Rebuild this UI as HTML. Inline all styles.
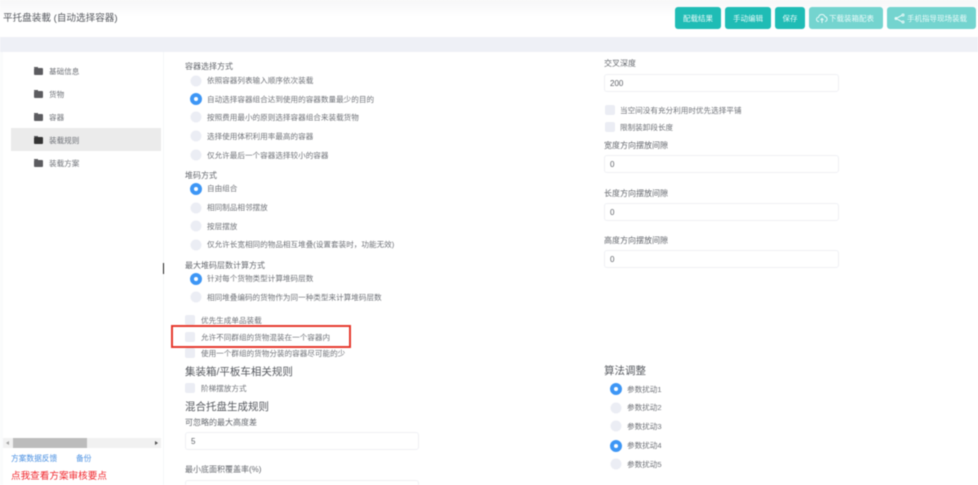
<!DOCTYPE html>
<html lang="zh">
<head>
<meta charset="utf-8">
<title>平托盘装载</title>
<style>
html,body{margin:0;padding:0;width:978px;height:485px;overflow:hidden;background:#fff}
body{position:relative;font-family:"Liberation Sans","Noto Sans CJK SC",sans-serif;color:#606266}
#w{position:absolute;left:0;top:0;width:978px;height:485px;overflow:hidden;filter:blur(.4px)}
.a{position:absolute;white-space:nowrap;line-height:12px;transform:translateY(-5px)}
.l{font-size:8px;color:#63666c}
.o{font-size:7.6px;color:#6e7177}
.h{font-size:10.5px;color:#55585e;line-height:14px;transform:translateY(-6px)}
.r{position:absolute;width:11px;height:11px;border-radius:50%;background:#ebedf4;transform:translate(-5.5px,-5.5px)}
.r.on{background:#fff;border:4px solid #3d96f5;width:4px;height:4px;transform:translate(-6px,-6px)}
.c{position:absolute;width:10px;height:10px;border-radius:2px;background:#ebedf4;transform:translateY(-5px)}
.i{position:absolute;box-sizing:border-box;background:#fff;border:1px solid #eff0f4;border-radius:3px;font-size:8px;color:#5f6268;line-height:18px;padding-left:5px}
.b{position:absolute;top:7px;height:22px;border-radius:3px;background:#1fbcb5;color:#e8faf9;font-size:7.5px;line-height:23px;text-align:center}
.b.d{background:#74d4cf}
.f{position:absolute;left:34px;width:9px;height:7px;background:#5c5c60;border-radius:1px;transform:translateY(-3px)}
.f:before{content:"";position:absolute;left:0;top:-1px;width:4px;height:1px;background:#5c5c60}
</style>
</head>
<body>
<div id="w">
<div style="position:absolute;left:0;top:0;width:978px;height:37px;background:linear-gradient(#f7f7f8,#fff 45%)"></div>
<div style="position:absolute;left:0;top:37px;width:978px;height:15px;background:#eef0f6"></div>
<div style="position:absolute;left:0;top:52px;width:3px;height:433px;background:#fafbfc"></div>
<div style="position:absolute;left:163px;top:52px;width:1px;height:433px;background:#f6f7f9"></div>

<div class="a" style="left:3px;top:18px;font-size:9.6px;color:#55585e">平托盘装載 (自动选择容器)</div>

<div class="b" style="left:675px;width:46px">配载结果</div>
<div class="b" style="left:725px;width:46px">手动编辑</div>
<div class="b" style="left:775px;width:30px">保存</div>
<div class="b d" style="left:809px;width:74px;padding-left:11px;box-sizing:border-box">下载装箱配表</div>
<svg style="position:absolute;left:816px;top:13px" width="12" height="11" viewBox="0 0 12 11" fill="none" stroke="#e8faf9" stroke-width="1"><path d="M3 8.5H2.6A2.1 2.1 0 0 1 2.6 4.3 3.3 3.3 0 0 1 9 3.8 2.4 2.4 0 0 1 9.2 8.5H9"/><path d="M6 10V5.5M4.5 7 6 5.5 7.500 7"/></svg>
<div class="b d" style="left:887px;width:89px;padding-left:11px;box-sizing:border-box">手机指导现场装载</div>
<svg style="position:absolute;left:894px;top:13px" width="11" height="11" viewBox="0 0 11 11" fill="none" stroke="#e8faf9" stroke-width="1"><path d="M8.500 2 2 5.500 8.500 9"/><circle cx="9" cy="2" r="1"/><circle cx="2" cy="5.500" r="1"/><circle cx="9" cy="9" r="1"/></svg>

<!-- sidebar -->
<div style="position:absolute;left:11px;top:128px;width:150px;height:23px;background:#ebebeb"></div>
<div class="f" style="top:71px"></div><div class="a o" style="left:49px;top:71px">基础信息</div>
<div class="f" style="top:94px"></div><div class="a o" style="left:49px;top:94px">货物</div>
<div class="f" style="top:117px"></div><div class="a o" style="left:49px;top:117px">容器</div>
<div class="f" style="top:140px;background:#333"></div><div class="a o" style="left:49px;top:140px">装载规则</div>
<div class="f" style="top:163px"></div><div class="a o" style="left:49px;top:163px">装载方案</div>

<div style="position:absolute;left:3px;top:438px;width:158px;height:10px;background:#f1f1f1"></div>
<div style="position:absolute;left:13px;top:438px;width:74px;height:10px;background:#bcbcbc"></div>
<div style="position:absolute;left:6px;top:441px;border:2px solid transparent;border-right:3px solid #a3a3a3;border-left:0"></div>
<div style="position:absolute;left:155px;top:441px;border:2px solid transparent;border-left:3px solid #505050;border-right:0"></div>
<div class="a" style="left:11px;top:458px;font-size:7.7px;color:#4a90e2">方案数据反馈</div>
<div class="a" style="left:76px;top:458px;font-size:7.7px;color:#4a90e2">备份</div>
<div class="a" style="left:11px;top:476px;font-size:9.6px;color:#f0262c">点我查看方案审核要点</div>
<div style="position:absolute;left:163px;top:263px;width:1px;height:11px;background:#222"></div>

<!-- middle column -->
<div class="a l" style="left:185px;top:66px">容器选择方式</div>
<div class="r" style="left:195.500px;top:81px"></div><div class="a o" style="left:207px;top:80px">依照容器列表输入顺序依次装载</div>
<div class="r on" style="left:195.500px;top:99px"></div><div class="a o" style="left:207px;top:99px">自动选择容器组合达到使用的容器数量最少的目的</div>
<div class="r" style="left:195.500px;top:117px"></div><div class="a o" style="left:207px;top:117px">按照费用最小的原则选择容器组合来装载货物</div>
<div class="r" style="left:195.500px;top:136px"></div><div class="a o" style="left:207px;top:136px">选择使用体积利用率最高的容器</div>
<div class="r" style="left:195.500px;top:155px"></div><div class="a o" style="left:207px;top:155px">仅允许最后一个容器选择较小的容器</div>

<div class="a l" style="left:185px;top:175px">堆码方式</div>
<div class="r on" style="left:195.500px;top:189px"></div><div class="a o" style="left:207px;top:188px">自由组合</div>
<div class="r" style="left:195.500px;top:207.500px"></div><div class="a o" style="left:207px;top:207px">相同制品相邻摆放</div>
<div class="r" style="left:195.500px;top:226px"></div><div class="a o" style="left:207px;top:226px">按层摆放</div>
<div class="r" style="left:195.500px;top:244.500px"></div><div class="a o" style="left:207px;top:244px">仅允许长宽相同的物品相互堆叠(设置套装时，功能无效)</div>

<div class="a l" style="left:185px;top:265px">最大堆码层数计算方式</div>
<div class="r on" style="left:195.500px;top:279px"></div><div class="a o" style="left:207px;top:278px">针对每个货物类型计算堆码层数</div>
<div class="r" style="left:195.500px;top:297px"></div><div class="a o" style="left:207px;top:297px">相同堆叠编码的货物作为同一种类型来计算堆码层数</div>

<div class="c" style="left:185px;top:320px"></div><div class="a o" style="left:201px;top:320px">优先生成单品装载</div>
<div class="c" style="left:185px;top:337px"></div><div class="a o" style="left:201px;top:337px">允许不同群组的货物混装在一个容器内</div>
<div class="c" style="left:185px;top:353px"></div><div class="a o" style="left:201px;top:353px">使用一个群组的货物分装的容器尽可能的少</div>
<div style="position:absolute;left:171px;top:325px;width:180px;height:23px;box-sizing:border-box;border:2px solid #e63a2e"></div>

<div class="a h" style="left:185px;top:371px">集装箱/平板车相关规则</div>
<div class="c" style="left:185px;top:388px"></div><div class="a o" style="left:201px;top:388px">阶梯摆放方式</div>
<div class="a h" style="left:185px;top:406px">混合托盘生成规则</div>
<div class="a l" style="left:185px;top:422px">可忽略的最大高度差</div>
<div class="i" style="left:185px;top:432px;width:234px;height:18px">5</div>
<div class="a l" style="left:185px;top:469px">最小底面积覆盖率(%)</div>
<div class="i" style="left:185px;top:480px;width:234px;height:18px"></div>

<!-- right column -->
<div class="a l" style="left:604px;top:63px">交叉深度</div>
<div class="i" style="left:604px;top:74px;width:235px;height:18px">200</div>
<div class="c" style="left:605px;top:110px"></div><div class="a o" style="left:620px;top:110px">当空间没有充分利用时优先选择平铺</div>
<div class="c" style="left:605px;top:127px"></div><div class="a o" style="left:620px;top:127px">限制装卸段长度</div>
<div class="a l" style="left:604px;top:145px">宽度方向摆放间隙</div>
<div class="i" style="left:604px;top:155px;width:235px;height:18px">0</div>
<div class="a l" style="left:604px;top:193px">长度方向摆放间隙</div>
<div class="i" style="left:604px;top:203px;width:235px;height:18px">0</div>
<div class="a l" style="left:604px;top:240px">高度方向摆放间隙</div>
<div class="i" style="left:604px;top:250px;width:235px;height:18px">0</div>

<div class="a h" style="left:604px;top:370px">算法调整</div>
<div class="r on" style="left:615.500px;top:389px"></div><div class="a o" style="left:627px;top:389px">参数扰动1</div>
<div class="r" style="left:615.500px;top:407.500px"></div><div class="a o" style="left:627px;top:407px">参数扰动2</div>
<div class="r" style="left:615.500px;top:426px"></div><div class="a o" style="left:627px;top:426px">参数扰动3</div>
<div class="r on" style="left:615.500px;top:445.500px"></div><div class="a o" style="left:627px;top:445px">参数扰动4</div>
<div class="r" style="left:615.500px;top:464px"></div><div class="a o" style="left:627px;top:464px">参数扰动5</div>
</div>
</body>
</html>
